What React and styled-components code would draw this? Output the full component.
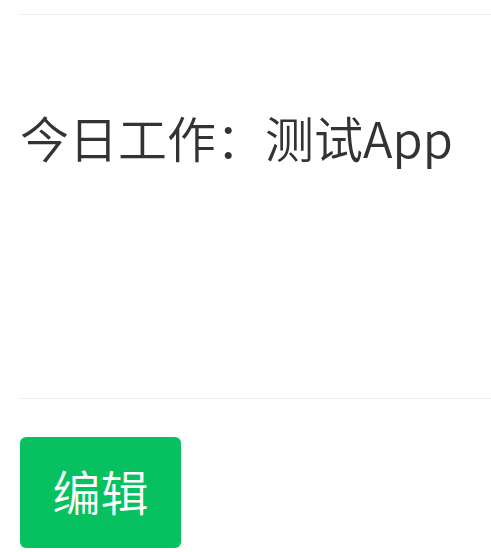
import React from 'react';
import styled, { createGlobalStyle } from 'styled-components';

const GlobalStyle = createGlobalStyle`
  html, body {
    margin: 0;
    padding: 0;
    background: #ffffff;
  }
  body {
    font-family: 'Noto Sans CJK SC', 'Noto Sans', sans-serif;
  }
`;

const Page = styled.div`
  padding-left: 20px;
  padding-top: 14px;
`;

const Divider = styled.div`
  height: 1px;
  background: #ececec;
`;

const Content = styled.div`
  padding: 86px 0 225px 0;
  font-size: 49px;
  font-weight: 350;
  line-height: 72px;
  color: #333333;
`;

const Footer = styled.div`
  padding-top: 38px;
`;

const Button = styled.button`
  width: 161px;
  height: 111px;
  border: none;
  border-radius: 6px;
  background: #07c160;
  color: #ffffff;
  font-family: 'Noto Sans CJK SC', 'Noto Sans', sans-serif;
  font-size: 48px;
  font-weight: 350;
  padding: 0 0 6px 0;
  cursor: pointer;
`;

export default function App() {
  return (
    <Page>
      <GlobalStyle />
      <Divider />
      <Content>今日工作：测试App</Content>
      <Divider />
      <Footer>
        <Button>编辑</Button>
      </Footer>
    </Page>
  );
}
